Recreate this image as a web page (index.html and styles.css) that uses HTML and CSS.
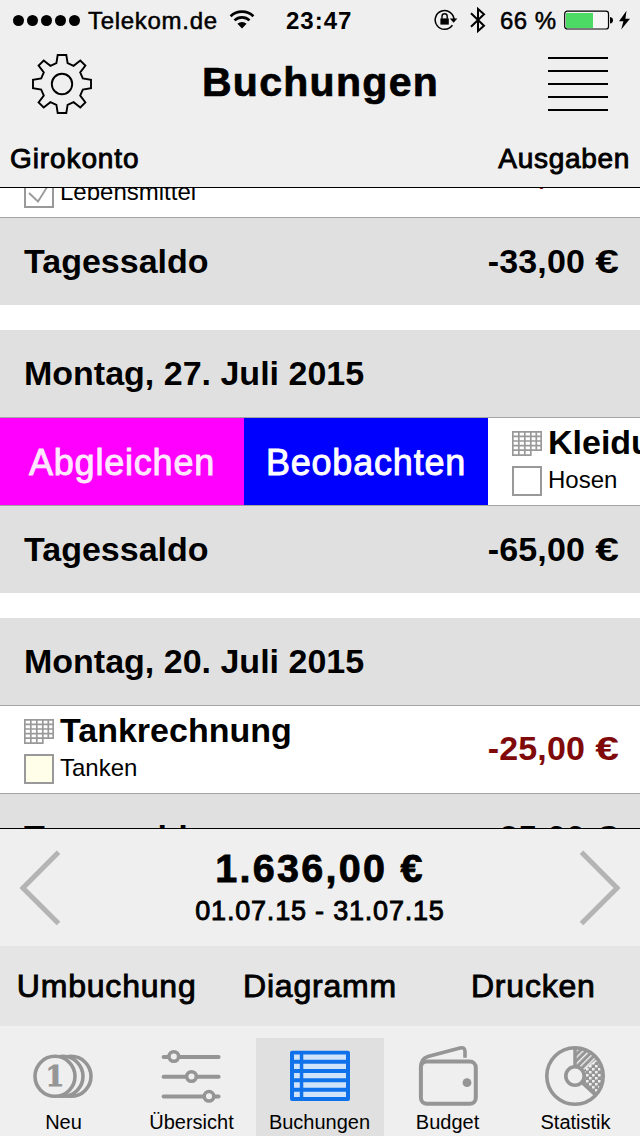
FILE: index.html
```html
<!DOCTYPE html>
<html lang="de">
<head>
  <meta charset="UTF-8" />
  <meta name="viewport" content="width=device-width, initial-scale=1" />
  <title>Buchungen</title>
  <link rel="stylesheet" href="styles.css">
</head>
<body>

  <header>
    <div class="status">
      <div class="signal"><i></i><i></i><i></i><i></i><i></i></div>
      <span class="carrier">Telekom.de</span>
      <svg class="wifi" width="26" height="20" viewBox="0 0 26 20">
        <path d="M1.6 6.2a16.5 16.5 0 0 1 22.8 0M5.5 10.4a10.8 10.8 0 0 1 15 0" fill="none" stroke="#000" stroke-width="2.7"/>
        <path d="M13 18.4l-4.6-4.6a6.8 6.8 0 0 1 9.2 0z"/>
      </svg>
      <span class="time">23:47</span>
      <div class="status-right">
        <svg class="lock" width="24" height="22" viewBox="0 0 24 22">
          <path d="M18.4 16.2A9.4 9.4 0 1 1 20 11" fill="none" stroke="#000" stroke-width="1.5"/>
          <path d="M15.8 9.6h7.6l-3.8 4.2z"/>
          <rect x="6.4" y="9.4" width="8.4" height="6.2"/>
          <path d="M8 9.8V7.4a2.6 2.6 0 0 1 5.2 0v2.4" fill="none" stroke="#000" stroke-width="1.4"/>
        </svg>
        <svg class="bluetooth" width="16" height="28" viewBox="0 0 16 28">
          <path d="M1 7.2l13 12.6-6 5.2V3l6 5.2L1 20.8" fill="none" stroke="#000" stroke-width="2"/>
        </svg>
        <span class="percent">66 %</span>
        <svg class="battery" width="68" height="20" viewBox="0 0 68 20">
          <rect x="0.7" y="1.2" width="43.8" height="17.8" rx="2.6" fill="#fff" fill-opacity=".4" stroke="#000" stroke-width="1.2"/>
          <rect x="2" y="3" width="27" height="15" fill="#4cd964"/>
          <path d="M46 7q3 .5 3 3.3t-3 3.3z"/>
          <path d="M62.5 .8L55 11.3h4.4L57.2 19.5 66 8.7h-4.6z"/>
        </svg>
      </div>
    </div>

    <div class="nav">
      <svg width="64" height="64" viewBox="-32 -32 64 64" fill="none" stroke="#000" stroke-width="1.9">
        <path d="M-4.3-29H4.3L5.6-20.8 11.6-18.2 18.3-23.4 23.4-18.3 18.2-11.6 20.8-5.6 29-4.3V4.3L20.8 5.6 18.2 11.6 23.4 18.3 18.3 23.4 11.6 18.2 5.6 20.8 4.3 29H-4.3L-5.6 20.8-11.6 18.2-18.3 23.4-23.4 18.3-18.2 11.6-20.8 5.6-29 4.3V-4.3L-20.8-5.6-18.2-11.6-23.4-18.3-18.3-23.4-11.6-18.2-5.6-20.8z"/>
        <circle r="10.2"/>
      </svg>
      <h1>Buchungen</h1>
      <div class="menu"><i></i><i></i><i></i><i></i><i></i></div>
    </div>

    <div class="account medium">
      <span class="konto">Girokonto</span>
      <span class="filter">Ausgaben</span>
    </div>
  </header>

  <main>
    <div class="content">
      <section>
        <div class="row">
          <div class="entry">
            <svg class="calendar" width="30" height="26"><use href="#calendar"/></svg>
            <span class="name"></span>
            <span class="box"><svg width="26" height="26" viewBox="0 0 26 26"><path d="M3 13l9 8.5L23 4" fill="none" stroke="#999" stroke-width="1.8"/></svg></span>
            <span class="category">Lebensmittel</span>
          </div>
          <span class="amount negative">-33,00 <i>€</i></span>
        </div>
        <div class="bar"><span>Tagessaldo</span><span class="amount">-33,00 <i>€</i></span></div>
      </section>

      <section>
        <div class="bar"><span>Montag, 27. Juli 2015</span></div>
        <div class="row swiped">
          <button class="action match medium">Abgleichen</button>
          <button class="action watch medium">Beobachten</button>
          <div class="entry">
            <svg class="calendar" width="30" height="26"><use href="#calendar"/></svg>
            <span class="name">Kleidung</span>
            <span class="box"></span>
            <span class="category">Hosen</span>
          </div>
        </div>
        <div class="bar"><span>Tagessaldo</span><span class="amount">-65,00 <i>€</i></span></div>
      </section>

      <section>
        <div class="bar"><span>Montag, 20. Juli 2015</span></div>
        <div class="row">
          <div class="entry">
            <svg class="calendar" width="30" height="26"><use href="#calendar"/></svg>
            <span class="name">Tankrechnung</span>
            <span class="box yellow"></span>
            <span class="category">Tanken</span>
          </div>
          <span class="amount negative">-25,00 <i>€</i></span>
        </div>
        <div class="bar"><span>Tagessaldo</span><span class="amount">-25,00 <i>€</i></span></div>
      </section>
    </div>
  </main>

  <div class="period">
    <svg width="42" height="76" viewBox="0 0 42 76"><path d="M39.5 2.3L3.9 38l35.6 35.5" fill="none" stroke="#b4b4b4" stroke-width="5"/></svg>
    <div class="total">
      <strong>1.636,00 €</strong>
      <span class="medium">01.07.15 - 31.07.15</span>
    </div>
    <svg width="42" height="76" viewBox="0 0 42 76"><path d="M2.5 2.3L38.1 38 2.5 73.5" fill="none" stroke="#b4b4b4" stroke-width="5"/></svg>
  </div>

  <div class="toolbar medium">
    <span>Umbuchung</span>
    <span>Diagramm</span>
    <span>Drucken</span>
  </div>

  <nav class="tabs">
    <div class="tab">
      <svg width="64" height="69" viewBox="0 0 64 69" fill="#efefef" stroke="#959595" stroke-width="3.6">
        <circle cx="39" cy="38.3" r="20"/>
        <circle cx="31" cy="38.3" r="20"/>
        <circle cx="23" cy="38.3" r="20"/>
        <text class="coin" x="23" y="48.3" text-anchor="middle">1</text>
      </svg>
      <span>Neu</span>
    </div>
    <div class="tab">
      <svg width="64" height="69" viewBox="0 0 64 69" fill="#efefef" stroke="#959595">
        <path d="M3.6 19h55M3.6 38.7h55M3.6 58.5h55" stroke-width="4" stroke-linecap="round"/>
        <g stroke-width="3.5">
          <circle cx="13.8" cy="18.5" r="4.8"/>
          <circle cx="31.5" cy="38.5" r="4.8"/>
          <circle cx="49" cy="58.3" r="4.8"/>
        </g>
      </svg>
      <span>Übersicht</span>
    </div>
    <div class="tab selected">
      <svg width="64" height="69" viewBox="0 0 64 69">
        <rect x="2" y="12.7" width="60" height="50.3" rx="2" fill="#0f72ea"/>
        <path d="M6 19.1h5.8M15.3 19.1H58M6 28.4h5.8M15.3 28.4H58M6 37.7h5.8M15.3 37.7H58M6 47h5.8M15.3 47H58M6 56.3h5.8M15.3 56.3H58" stroke="#cfe3fa" stroke-width="5.3"/>
      </svg>
      <span>Buchungen</span>
    </div>
    <div class="tab">
      <svg width="64" height="69" viewBox="0 0 64 69" fill="none" stroke="#959595" stroke-width="4">
        <rect x="4.9" y="23.6" width="54.9" height="42.2" rx="6"/>
        <path d="M4.9 29c0-6 2-9 7-10.5L44 10q5-1.3 5 3.5v6.3" stroke-width="3.6"/>
        <circle cx="51" cy="44.7" r="4.4" fill="#959595" stroke="none"/>
      </svg>
      <span>Budget</span>
    </div>
    <div class="tab">
      <svg width="64" height="69" viewBox="0 0 64 69" fill="none" stroke="#959595">
        <defs>
          <pattern id="stripes" width="4.5" height="4.5" patternUnits="userSpaceOnUse" patternTransform="rotate(45)">
            <rect width="4.5" height="4.5" fill="#959595" stroke="none"/>
            <rect width="1.4" height="4.5" fill="#efefef" stroke="none"/>
          </pattern>
          <pattern id="checks" width="6" height="6" patternUnits="userSpaceOnUse">
            <rect width="6" height="6" fill="#959595" stroke="none"/>
            <path d="M0 0h2.6v2.6H0zM3 3h2.6v2.6H3z" fill="#efefef" stroke="none"/>
          </pattern>
        </defs>
        <path d="M31 38V10a28 28 0 0 1 22 11z" fill="url(#stripes)" stroke="none"/>
        <path d="M31 38l22-15A28 28 0 0 1 51 57.5z" fill="url(#checks)" stroke="none"/>
        <path d="M31 38V10M31 38l20 18.5" stroke-width="3.5"/>
        <circle cx="31" cy="38" r="28.2" stroke-width="3.6"/>
        <circle cx="31" cy="38" r="9.2" fill="#efefef" stroke-width="3.6"/>
      </svg>
      <span>Statistik</span>
    </div>
  </nav>

  <!-- calendar sheet used in every booking row -->
  <svg class="symbols" width="0" height="0">
    <symbol id="calendar" viewBox="0 0 30 26">
      <path d="M.8 .8h28.4v18.4H.8zM.8 19.2v4.9h18V.8M.8 5.4h28.4M.8 10h28.4M.8 14.6h28.4M6.8 .8v23.3M12.8 .8v23.3M24.3 .8v18.4" fill="none" stroke="#999" stroke-width="1.7"/>
    </symbol>
  </svg>

</body>
</html>
```
FILE: styles.css
```css
* {
  box-sizing: border-box;
}
body {
  margin: 0;
  width: 640px;
  height: 1136px;
  display: flex;
  flex-direction: column;
  overflow: hidden;
  font-family: "Liberation Sans", Arial, sans-serif;
  color: #000;
  background: #efefef;
}
svg {
  display: block;
  flex: none;
}
.medium {
  -webkit-text-stroke: 0.9px currentColor;
}
header {
  height: 188px;
  border-bottom: 1px solid #000;
}

/* status bar */
.status {
  display: flex;
  align-items: center;
  height: 40px;
  padding: 0 8px 0 13px;
  font-size: 24px;
  line-height: 41px;
}
.signal {
  display: flex;
  gap: 3px;
}
.signal i {
  width: 11px;
  height: 11px;
  border-radius: 50%;
  background: #000;
}
.carrier {
  width: 149px;
  padding-left: 8px;
  letter-spacing: 0.7px;
  -webkit-text-stroke: 0.5px #000;
}
.time {
  margin-left: 31px;
  font-weight: bold;
  letter-spacing: 1px;
}
.status-right {
  display: flex;
  align-items: center;
  margin-left: auto;
}
.bluetooth {
  margin: 0 14px 0 12px;
}
.percent {
  width: 64px;
  letter-spacing: 0.5px;
  -webkit-text-stroke: 0.5px #000;
}

/* title */
.nav {
  display: flex;
  align-items: center;
  justify-content: space-between;
  height: 88px;
  padding: 0 32px 0 30px;
}
h1 {
  margin: 0;
  padding: 0 1px 3px 0;
  font-size: 41px;
  letter-spacing: 1.3px;
  -webkit-text-stroke: 0.7px #000;
}
.menu {
  display: flex;
  flex-direction: column;
  gap: 11px;
  width: 60px;
}
.menu i {
  height: 2px;
  background: #000;
}
.account {
  display: flex;
  justify-content: space-between;
  padding: 0 10px;
  font-size: 28px;
  line-height: 61px;
  height: 59px;
}
.konto {
  letter-spacing: 0.9px;
}
.filter {
  letter-spacing: 0.7px;
}

/* bookings, scrolled up a little */
main {
  height: 640px;
  overflow: hidden;
  background: #fff;
}
.content {
  margin-top: -58px;
}
section {
  margin-bottom: 25px;
}
.bar {
  display: flex;
  justify-content: space-between;
  height: 87px;
  padding: 0 21px 0 24px;
  font-size: 34px;
  font-weight: bold;
  line-height: 87px;
  background: #e0e0e0;
}
.row {
  display: flex;
  justify-content: space-between;
  height: 88px;
  padding-right: 21px;
  border-bottom: 1px solid #a5a5a5;
}
.bar + .row {
  height: 89px;
  border-top: 1px solid #a5a5a5;
}
.amount {
  font-size: 34px;
  font-weight: bold;
  letter-spacing: 0.2px;
  word-spacing: 5px;
}
.amount i {
  display: inline-block;
  font-style: normal;
  transform: scaleX(1.25);
  transform-origin: right;
}
.negative {
  line-height: 84px;
  color: #800a0a;
}
.entry {
  flex: none;
  display: grid;
  grid-template-columns: 30px auto;
  grid-template-rows: 35px 30px;
  column-gap: 6px;
  align-content: start;
  padding: 13px 0 0 24px;
}
.name {
  font-size: 34px;
  font-weight: bold;
  line-height: 22px;
}
.box {
  width: 30px;
  height: 30px;
  border: 2px solid #999;
  background: #fff;
}
.yellow {
  background: #fffee8;
}
.category {
  font-size: 24px;
  line-height: 27px;
}
.swiped {
  padding-right: 0;
  justify-content: flex-start;
  overflow: hidden;
}
.action {
  flex: none;
  width: 244px;
  padding: 3px 0 0;
  border: none;
  font-family: inherit;
  font-size: 36px;
  letter-spacing: 0.8px;
  color: #fff;
}
.match {
  background: #ff00ff;
  color: #ffe8ff;
}
.watch {
  background: #0000ff;
}

/* period and total */
.period {
  display: flex;
  justify-content: space-between;
  height: 118px;
  padding: 21px 19px 0;
  border-top: 1px solid #000;
}
.total {
  display: flex;
  flex-direction: column;
  align-items: center;
  margin-top: -4px;
}
.total strong {
  font-size: 39.5px;
  line-height: 44px;
  letter-spacing: 2.3px;
  -webkit-text-stroke: 0.8px #000;
}
.total span {
  font-size: 27px;
  line-height: 42px;
  letter-spacing: 0.8px;
}

.toolbar {
  display: grid;
  grid-template-columns: repeat(3, 1fr);
  height: 80px;
  font-size: 32px;
  line-height: 80px;
  letter-spacing: 0.8px;
  text-align: center;
  background: #e5e5e5;
}

/* tab bar */
.tabs {
  display: grid;
  grid-template-columns: repeat(5, 128px);
  height: 110px;
  padding-top: 12px;
}
.tab {
  display: flex;
  flex-direction: column;
  align-items: center;
  font-size: 20px;
  line-height: 31px;
}
.tab span {
  margin-right: 1px;
}
.selected {
  background: #e0e0e0;
}
.coin {
  font-family: "DejaVu Serif", serif;
  font-size: 27px;
  font-weight: bold;
  fill: #959595;
  stroke: #959595;
  stroke-width: 0.8px;
}
.symbols {
  position: absolute;
}
```
